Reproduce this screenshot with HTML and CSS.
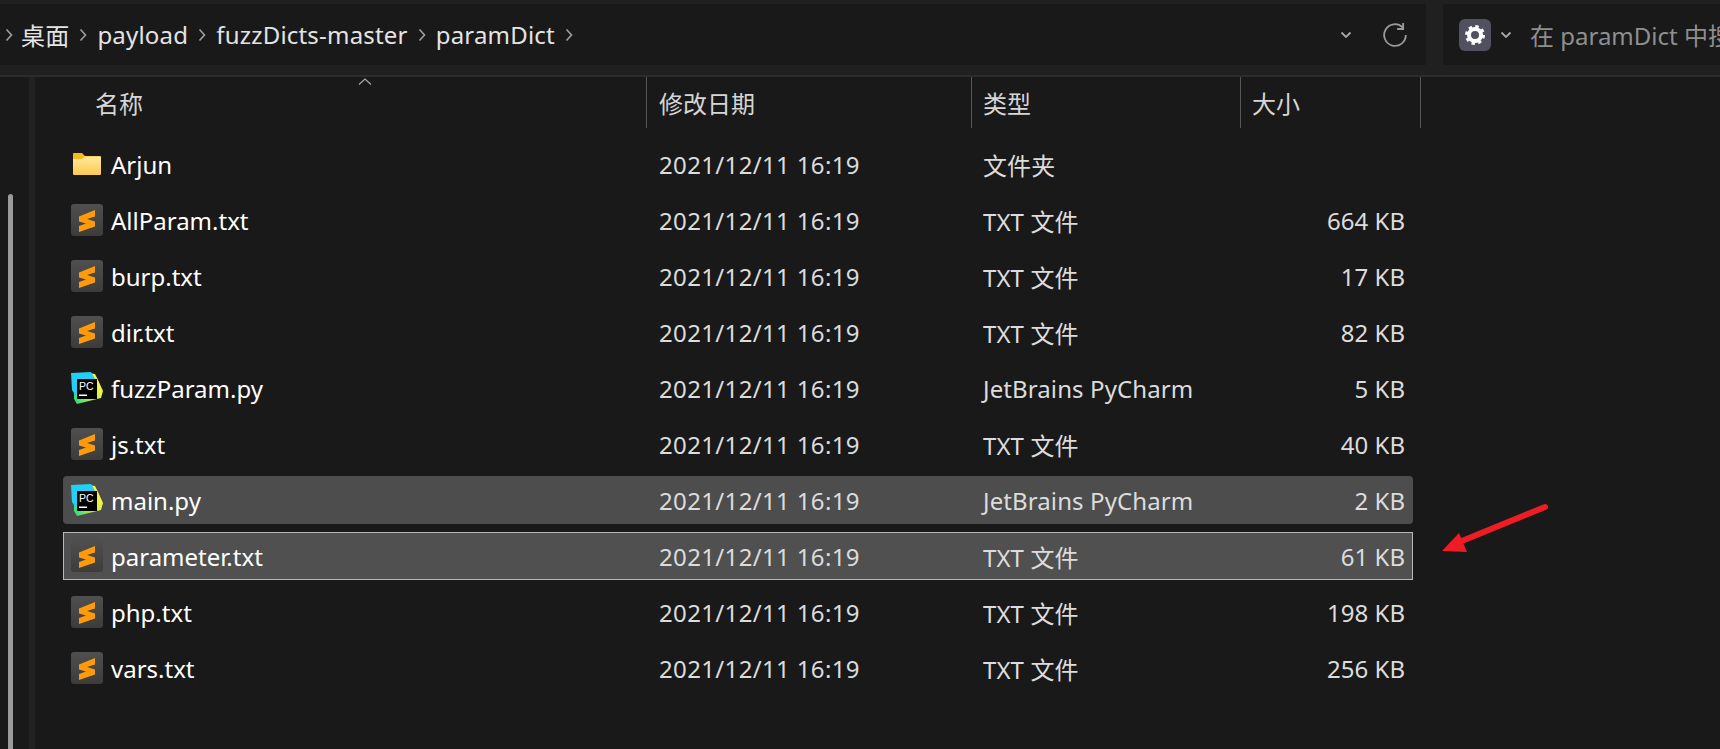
FILE: index.html
```html
<!DOCTYPE html>
<html>
<head>
    <meta charset="utf-8">
    <title>paramDict</title>
    <link rel="stylesheet" href="styles.css">
</head>
<body>
<svg class="defs" width="0" height="0">
    <defs>
        <linearGradient id="folderBody" x1="0" y1="0" x2="0" y2="1">
            <stop offset="0" stop-color="#ffe9a0"/>
            <stop offset="1" stop-color="#fbc94f"/>
        </linearGradient>
        <linearGradient id="subBg" x1="0" y1="0" x2="0" y2="1">
            <stop offset="0" stop-color="#4f4f4f"/>
            <stop offset="1" stop-color="#3c3c3c"/>
        </linearGradient>
        <linearGradient id="pcGreen" x1="0" y1="1" x2="1" y2="0.4">
            <stop offset="0" stop-color="#21d789"/>
            <stop offset="0.6" stop-color="#c8ee3c"/>
            <stop offset="1" stop-color="#fcf84a"/>
        </linearGradient>
        <symbol id="folder" viewBox="0 0 28 22">
            <path d="M1 0h8l3 3h15a1 1 0 0 1 1 1v3H0V1a1 1 0 0 1 1-1z" fill="#f6b91f"/>
            <path d="M0 6h9l3-2.500h15a1 1 0 0 1 1 1V21a1 1 0 0 1-1 1H1a1 1 0 0 1-1-1z" fill="url(#folderBody)"/>
        </symbol>
        <symbol id="sublime" viewBox="0 0 32 32">
            <rect width="32" height="32" rx="3" fill="url(#subBg)"/>
            <path d="M8 12.500 24 6V12.500L16 15 24 17.500V22.500L8 28V22L15 19.500 8 17.500Z" fill="#ff9a0a"/>
        </symbol>
        <symbol id="pycharm" viewBox="0 0 32 32">
            <path d="M3 16 18 1 24 2 27 8 32 19 30 26 6 32 3 27Z" fill="url(#pcGreen)"/>
            <path d="M0 1 20 0 24 7 5 24 1 18Z" fill="#21d0f7"/>
            <rect x="6" y="7" width="20" height="20" fill="#000"/>
            <text x="8" y="17.500" class="pc-text">PC</text>
            <rect x="8" y="22.500" width="8" height="1.500" fill="#fff"/>
        </symbol>
    </defs>
</svg>

<div class="toolbar">
    <div class="address">
        <svg class="crumb-sep first" viewBox="0 0 8 14"><path d="M1.500 1.500 6.500 7l-5 5.500"/></svg>
        <span class="crumb">桌面</span>
        <svg class="crumb-sep" viewBox="0 0 8 14"><path d="M1.500 1.500 6.500 7l-5 5.500"/></svg>
        <span class="crumb">payload</span>
        <svg class="crumb-sep" viewBox="0 0 8 14"><path d="M1.500 1.500 6.500 7l-5 5.500"/></svg>
        <span class="crumb">fuzzDicts-master</span>
        <svg class="crumb-sep" viewBox="0 0 8 14"><path d="M1.500 1.500 6.500 7l-5 5.500"/></svg>
        <span class="crumb">paramDict</span>
        <svg class="crumb-sep" viewBox="0 0 8 14"><path d="M1.500 1.500 6.500 7l-5 5.500"/></svg>
        <svg class="chev addr-chev" viewBox="0 0 12 8"><path d="M1.500 1.500 6 6l4.500-4.500"/></svg>
        <svg class="refresh" viewBox="0 0 24 24"><path d="M22 12A10 10 0 1 1 19 4.900M19.500 1V6.500H14"/></svg>
    </div>
    <div class="search">
        <span class="gear-btn">
            <svg viewBox="0 0 32 32" width="32" height="32">
                <circle cx="16" cy="16" r="8.500" class="gear-teeth"/>
                <circle cx="16" cy="16" r="6" class="gear-ring"/>
            </svg>
        </span>
        <svg class="chev" viewBox="0 0 12 8"><path d="M1.500 1.500 6 6l4.500-4.500"/></svg>
        <span class="search-text">在 paramDict 中搜索</span>
    </div>
</div>

<div class="main">
    <div class="gutter">
        <div class="scroll-track"><div class="scroll-thumb"></div></div>
        <div class="divider"></div>
    </div>
    <div class="files">
        <div class="header">
            <div class="col name-col">名称<svg class="sort" viewBox="0 0 14 7"><path d="M1 6.500 7 1l6 5.500"/></svg></div>
            <div class="col date-col">修改日期</div>
            <div class="col">类型</div>
            <div class="col">大小</div>
        </div>
        <div class="list">
            <div class="row"><span class="name"><svg class="ico folder"><use href="#folder"/></svg>Arjun</span><span class="date">2021/12/11 16:19</span><span class="type">文件夹</span><span class="size"></span></div>
            <div class="row"><span class="name"><svg class="ico"><use href="#sublime"/></svg>AllParam.txt</span><span class="date">2021/12/11 16:19</span><span class="type">TXT 文件</span><span class="size">664 KB</span></div>
            <div class="row"><span class="name"><svg class="ico"><use href="#sublime"/></svg>burp.txt</span><span class="date">2021/12/11 16:19</span><span class="type">TXT 文件</span><span class="size">17 KB</span></div>
            <div class="row"><span class="name"><svg class="ico"><use href="#sublime"/></svg>dir.txt</span><span class="date">2021/12/11 16:19</span><span class="type">TXT 文件</span><span class="size">82 KB</span></div>
            <div class="row"><span class="name"><svg class="ico"><use href="#pycharm"/></svg>fuzzParam.py</span><span class="date">2021/12/11 16:19</span><span class="type">JetBrains PyCharm</span><span class="size">5 KB</span></div>
            <div class="row"><span class="name"><svg class="ico"><use href="#sublime"/></svg>js.txt</span><span class="date">2021/12/11 16:19</span><span class="type">TXT 文件</span><span class="size">40 KB</span></div>
            <div class="row selected"><span class="name"><svg class="ico"><use href="#pycharm"/></svg>main.py</span><span class="date">2021/12/11 16:19</span><span class="type">JetBrains PyCharm</span><span class="size">2 KB</span></div>
            <div class="row selected focused"><span class="name"><svg class="ico"><use href="#sublime"/></svg>parameter.txt</span><span class="date">2021/12/11 16:19</span><span class="type">TXT 文件</span><span class="size">61 KB</span></div>
            <div class="row"><span class="name"><svg class="ico"><use href="#sublime"/></svg>php.txt</span><span class="date">2021/12/11 16:19</span><span class="type">TXT 文件</span><span class="size">198 KB</span></div>
            <div class="row"><span class="name"><svg class="ico"><use href="#sublime"/></svg>vars.txt</span><span class="date">2021/12/11 16:19</span><span class="type">TXT 文件</span><span class="size">256 KB</span></div>
        </div>
    </div>
</div>

<!-- annotation drawn over the screenshot -->
<svg class="arrow" viewBox="0 0 1720 749">
    <path d="M1545 507 1452 545" class="arrow-line"/>
    <path d="M1442 551 1459 533 1467 552Z" fill="#ee1c25"/>
</svg>
</body>
</html>
```

FILE: styles.css
```css
*{margin:0;padding:0;box-sizing:border-box;}
html,body{height:100%;overflow:hidden;}
body{background:#191919;color:#e2e2e2;font-family:"Noto Sans","Noto Sans CJK SC",sans-serif;font-size:24px;position:relative;}
.defs{position:absolute;}
.pc-text{font-family:"Liberation Sans",sans-serif;font-size:10.5px;fill:#fff;}

.toolbar{display:flex;gap:17px;height:77px;padding-top:4px;padding-bottom:10px;background:#202020;border-bottom:2px solid #2c2c2c;}
.address{width:1426px;background:#191919;display:flex;align-items:center;padding-left:5px;color:#e4e4e4;}
.crumb{letter-spacing:.2px;}
.crumb-sep{width:8px;height:14px;margin:0 10px;flex:none;}
.crumb-sep.first{margin:0 8px 0 0;}
.crumb-sep path{fill:none;stroke:#a0a0a0;stroke-width:1.6;}
.chev{width:12px;height:8px;flex:none;}
.chev path{fill:none;stroke:#a8a8a8;stroke-width:1.8;}
.addr-chev{margin-left:auto;}
.refresh{width:26px;height:26px;margin:0 18px 0 30px;flex:none;}
.refresh path{fill:none;stroke:#9a9a9a;stroke-width:1.7;}

.search{flex:1;min-width:0;background:#191919;display:flex;align-items:center;padding-left:16px;white-space:nowrap;overflow:hidden;color:#8f8f8f;}
.gear-btn{width:32px;height:32px;border-radius:6px;background:#50505f;flex:none;}
.gear-teeth{fill:none;stroke:#fff;stroke-width:3;stroke-dasharray:3.340 3.340;}
.gear-ring{fill:none;stroke:#fff;stroke-width:4;}
.search .chev{margin:0 18px 0 9px;}

.main{display:flex;height:672px;}
.gutter{width:63px;flex:none;display:flex;}
.scroll-track{width:29px;padding:117px 0 0 8px;}
.scroll-thumb{width:5px;height:100%;background:#9b9b9b;border-radius:3px 3px 0 0;}
.divider{width:6px;background:#212121;}

.header{display:grid;grid-template-columns:584px 325px 269px 180px;height:51px;}
.col{display:flex;align-items:center;height:51px;padding-left:11px;border-right:1px solid #555;color:#d6d6d6;}
.date-col{padding-left:12px;}
.name-col{padding-left:32px;position:relative;}
.sort{position:absolute;left:295px;top:1px;width:14px;height:7px;}
.sort path{fill:none;stroke:#aaa;stroke-width:1.2;}

.list{display:flex;flex-direction:column;gap:8px;margin-top:12px;}
.row{display:grid;grid-template-columns:583px 325px 269px 173px;width:1350px;height:48px;align-items:center;border-radius:4px;color:#dcdcdc;}
.row span{padding-left:13px;white-space:nowrap;}
.row .name{display:flex;align-items:center;gap:8px;padding-left:8px;color:#fff;}
.row .date{letter-spacing:.35px;}
.row .type{padding-left:12px;letter-spacing:.1px;}
.row .size{padding:0 8px 0 0;text-align:right;}
.ico{width:32px;height:32px;flex:none;}
.ico.folder{width:28px;height:22px;margin:0 2px;}
.selected{background:#4d4d4d;}
.focused{background:#505050;box-shadow:inset 0 0 0 1px #b8b8b8;border-radius:0;}

.arrow{position:absolute;left:0;top:0;width:1720px;height:749px;pointer-events:none;}
.arrow-line{fill:none;stroke:#ee1c25;stroke-width:6;stroke-linecap:round;}
```
